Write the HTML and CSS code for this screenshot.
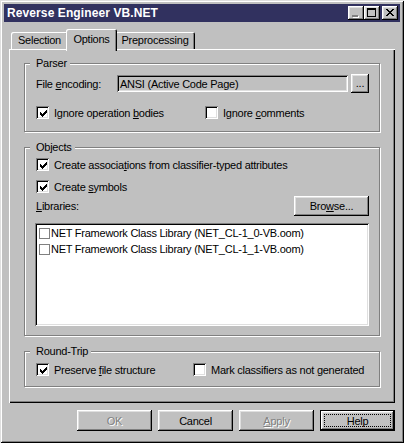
FILE: index.html
```html
<!DOCTYPE html>
<html>
  <head>
    <meta charset="UTF-8">
    <title>Reverse Engineer VB.NET</title>
    <link rel="stylesheet" href="styles.css">
  </head>
  <body>
    <div class="window">
      <div class="titlebar">
        <span class="title">Reverse Engineer VB.NET</span>
        <div class="caption-buttons">
          <span class="cap-btn">
            <svg width="16" height="14" viewBox="0 0 16 14" shape-rendering="crispEdges">
              <rect x="5" y="10" width="6" height="2" fill="#fff"/>
              <rect x="4" y="9" width="6" height="2" fill="#808080"/>
            </svg>
          </span>
          <span class="cap-btn">
            <svg width="16" height="14" viewBox="0 0 16 14" shape-rendering="crispEdges">
              <path d="M3 2h9v9h-9z M4 4v6h7v-6z" fill="#000" fill-rule="evenodd"/>
            </svg>
          </span>
          <span class="cap-btn close">
            <svg width="16" height="14" viewBox="0 0 16 14" shape-rendering="crispEdges">
              <path transform="translate(4 3)" d="M0 0h2v1h-2z M6 0h2v1h-2z M1 1h2v1h-2z M5 1h2v1h-2z M2 2h4v1h-4z M3 3h2v1h-2z M2 4h4v1h-4z M1 5h2v1h-2z M5 5h2v1h-2z M0 6h2v1h-2z M6 6h2v1h-2z" fill="#000"/>
            </svg>
          </span>
        </div>
      </div>

      <div class="tabs">
        <span class="tab tab-selection">Selection</span>
        <span class="tab tab-options active">Options</span>
        <span class="tab tab-pre">Preprocessing</span>
      </div>

      <div class="panel">
        <div class="group parser">
          <span class="legend">Parser</span>
          <div class="row encoding">
            <span class="field-label">File <u>e</u>ncoding:</span>
            <div class="textbox">ANSI (Active Code Page)</div>
            <span class="btn dots">...</span>
          </div>
          <div class="row checks">
            <label class="check col-a">
              <span class="box"><svg width="7" height="7" viewBox="0 0 7 7" shape-rendering="crispEdges"><polygon points="0,2 1,2 1,3 2,3 2,4 3,4 3,3 4,3 4,2 5,2 5,1 6,1 6,0 7,0 7,3 6,3 6,4 5,4 5,5 4,5 4,6 3,6 3,7 2,7 2,6 1,6 1,5 0,5"/></svg></span>
              <span class="text">Ignore operation <u>b</u>odies</span>
            </label>
            <label class="check">
              <span class="box"></span>
              <span class="text">Ignore <u>c</u>omments</span>
            </label>
          </div>
        </div>

        <div class="group objects">
          <span class="legend">Objects</span>
          <label class="check first">
            <span class="box"><svg width="7" height="7" viewBox="0 0 7 7" shape-rendering="crispEdges"><polygon points="0,2 1,2 1,3 2,3 2,4 3,4 3,3 4,3 4,2 5,2 5,1 6,1 6,0 7,0 7,3 6,3 6,4 5,4 5,5 4,5 4,6 3,6 3,7 2,7 2,6 1,6 1,5 0,5"/></svg></span>
            <span class="text">Create associa<u>t</u>ions from classifier-typed attributes</span>
          </label>
          <label class="check second">
            <span class="box"><svg width="7" height="7" viewBox="0 0 7 7" shape-rendering="crispEdges"><polygon points="0,2 1,2 1,3 2,3 2,4 3,4 3,3 4,3 4,2 5,2 5,1 6,1 6,0 7,0 7,3 6,3 6,4 5,4 5,5 4,5 4,6 3,6 3,7 2,7 2,6 1,6 1,5 0,5"/></svg></span>
            <span class="text">Create <u>s</u>ymbols</span>
          </label>
          <div class="row libraries">
            <span class="field-label"><u>L</u>ibraries:</span>
            <span class="btn browse"><span>Bro<u>w</u>se...</span></span>
          </div>
          <div class="listbox">
            <div class="list-item"><span class="mini-box"></span><span>NET Framework Class Library (NET_CL-1_0-VB.oom)</span></div>
            <div class="list-item"><span class="mini-box"></span><span>NET Framework Class Library (NET_CL-1_1-VB.oom)</span></div>
          </div>
        </div>

        <div class="group roundtrip">
          <span class="legend">Round-Trip</span>
          <div class="row checks">
            <label class="check col-b">
              <span class="box"><svg width="7" height="7" viewBox="0 0 7 7" shape-rendering="crispEdges"><polygon points="0,2 1,2 1,3 2,3 2,4 3,4 3,3 4,3 4,2 5,2 5,1 6,1 6,0 7,0 7,3 6,3 6,4 5,4 5,5 4,5 4,6 3,6 3,7 2,7 2,6 1,6 1,5 0,5"/></svg></span>
              <span class="text">Preserve <u>f</u>ile structure</span>
            </label>
            <label class="check">
              <span class="box"></span>
              <span class="text">Mark classifiers as not <u>g</u>enerated</span>
            </label>
          </div>
        </div>
      </div>

      <div class="dialog-buttons">
        <span class="btn push disabled">OK</span>
        <span class="btn push">Cancel</span>
        <span class="btn push disabled"><span><u>A</u>pply</span></span>
        <span class="btn push default"><span class="focus">Help</span></span>
      </div>
    </div>
  </body>
</html>
```

FILE: styles.css
```css
body {
  margin: 0;
  background-color: #c0c0c0;
  font-family: "Liberation Sans", Arial, sans-serif;
  font-size: 11px;
  letter-spacing: -0.25px;
  color: #000;
}

u {
  text-decoration: underline;
  text-underline-offset: 1px;
}

.window {
  box-sizing: border-box;
  width: 404px;
  height: 443px;
  padding: 4px;
  background-color: #c0c0c0;
  box-shadow: inset 1px 1px #dfdfdf, inset -1px -1px #000, inset 2px 2px #fff, inset -2px -2px #808080;
}

/* title bar */

.titlebar {
  display: flex;
  align-items: center;
  justify-content: space-between;
  height: 18px;
  background-color: #31315f;
  padding: 0 3px;
}

.title {
  color: #fff;
  font-weight: bold;
  font-size: 12px;
  letter-spacing: 0.1px;
}

.caption-buttons {
  display: flex;
  align-items: center;
  margin-right: -1px;
}

.cap-btn {
  display: block;
  width: 16px;
  height: 14px;
  background-color: #c0c0c0;
  box-shadow: inset -1px -1px #000, inset 1px 1px #fff, inset -2px -2px #808080, inset 2px 2px #dfdfdf;
}

.cap-btn svg {
  display: block;
}

.cap-btn.close {
  margin-left: 2px;
}

/* tabs */

.tabs {
  position: relative;
  z-index: 1;
  display: flex;
  align-items: flex-end;
  height: 20px;
  margin-top: 7px;
  padding-left: 7px;
}

.tab {
  box-sizing: border-box;
  height: 17px;
  line-height: 17px;
  text-align: center;
  background-color: #c0c0c0;
  border-radius: 2px 2px 0 0;
  box-shadow: inset 1px 1px #fff, inset -1px 0 #000, inset -2px 0 #808080;
}

.tab-selection {
  width: 57px;
}

.tab-options {
  width: 47px;
}

.tab-pre {
  width: 80px;
}

.tab.active {
  width: 51px;
  height: 22px;
  line-height: 20px;
  margin: 0 -2px -2px -2px;
  position: relative;
  z-index: 2;
}

/* panel */

.panel {
  box-sizing: border-box;
  width: 386px;
  height: 354px;
  margin-left: 5px;
  padding: 14px 0 0 15px;
  box-shadow: inset 1px 1px #fff, inset -1px -1px #000, inset -2px -2px #808080;
}

.group {
  box-sizing: border-box;
  width: 356px;
  border: 1px solid #808080;
  box-shadow: inset 1px 1px #fff, 1px 1px #fff;
  padding: 0 0 0 11px;
}

.group.parser {
  height: 69px;
}

.group.objects {
  height: 189px;
  margin-top: 15px;
}

.group.roundtrip {
  height: 36px;
  margin-top: 15px;
}

.legend {
  display: table;
  height: 13px;
  line-height: 13px;
  margin: -7px 0 0 -6px;
  padding: 0 3px 0 6px;
  background-color: #c0c0c0;
}

.row {
  display: flex;
  align-items: center;
}

.field-label {
  white-space: nowrap;
}

/* parser */

.encoding {
  height: 19px;
  margin-top: 4px;
}

.encoding .field-label {
  width: 81px;
}

.textbox {
  box-sizing: border-box;
  width: 231px;
  height: 17px;
  line-height: 14px;
  padding: 2px 0 0 3px;
  background-color: #c0c0c0;
  box-shadow: inset 1px 1px #808080, inset -1px -1px #fff, inset 2px 2px #000, inset -2px -2px #dfdfdf;
}

.btn {
  box-sizing: border-box;
  display: flex;
  align-items: center;
  justify-content: center;
  background-color: #c0c0c0;
  box-shadow: inset -1px -1px #000, inset 1px 1px #fff, inset -2px -2px #808080, inset 2px 2px #dfdfdf;
}

.btn.dots {
  width: 18px;
  height: 19px;
  margin-left: 3px;
  padding-bottom: 2px;
  line-height: 10px;
}

.checks {
  margin-top: 13px;
  height: 13px;
}

.check {
  display: flex;
  align-items: center;
  height: 13px;
  white-space: nowrap;
}

.check.col-a {
  width: 169px;
}

.check.col-b {
  width: 157px;
}

.box {
  box-sizing: border-box;
  display: flex;
  align-items: center;
  justify-content: center;
  width: 13px;
  height: 13px;
  margin-right: 5px;
  background-color: #fff;
  box-shadow: inset 1px 1px #808080, inset -1px -1px #fff, inset 2px 2px #000, inset -2px -2px #dfdfdf;
}

.box svg {
  display: block;
  margin: 1px 0 0 1px;
}

/* objects */

.check.first {
  margin-top: 4px;
}

.check.second {
  margin-top: 9px;
}

.libraries {
  justify-content: space-between;
  width: 333px;
  margin-top: 3px;
}

.btn.browse {
  width: 75px;
  height: 20px;
}

.listbox {
  box-sizing: border-box;
  width: 334px;
  height: 103px;
  margin: 7px 0 0 -1px;
  padding: 2px 0 0 4px;
  background-color: #fff;
  box-shadow: inset 1px 1px #808080, inset -1px -1px #fff, inset 2px 2px #000, inset -2px -2px #dfdfdf;
}

.list-item {
  display: flex;
  align-items: center;
  height: 16px;
  white-space: nowrap;
}

.mini-box {
  box-sizing: border-box;
  width: 11px;
  height: 11px;
  margin-right: 1px;
  border: 1px solid #808080;
  background-color: #fff;
}

/* roundtrip */

.roundtrip .checks {
  margin-top: 5px;
}

/* dialog buttons */

.dialog-buttons {
  display: flex;
  justify-content: flex-end;
  gap: 6px;
  margin-top: 7px;
  padding-right: 5px;
}

.btn.push {
  width: 75px;
  height: 21px;
}

.btn.disabled {
  color: #808080;
  text-shadow: 1px 1px #fff;
}

.btn.default {
  box-shadow: inset 0 0 0 1px #000, inset -2px -2px #000, inset 2px 2px #fff, inset -3px -3px #808080, inset 3px 3px #dfdfdf;
}

.focus {
  box-sizing: border-box;
  display: flex;
  align-items: center;
  justify-content: center;
  width: 67px;
  height: 13px;
  border: 1px dotted #000;
}
```
